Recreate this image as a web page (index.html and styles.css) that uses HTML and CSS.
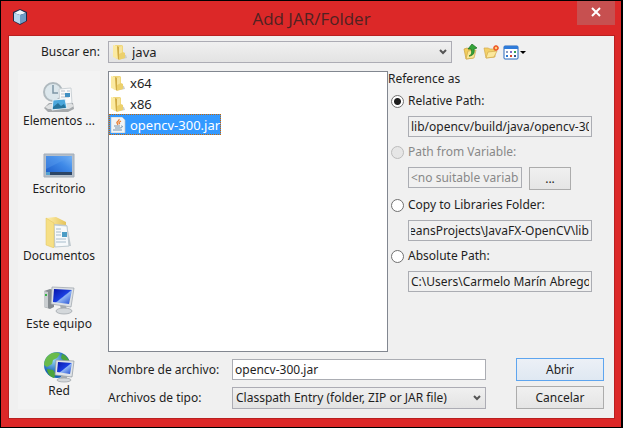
FILE: index.html
```
<!DOCTYPE html>
<html lang="es">
<head>
<meta charset="utf-8">
<title>Add JAR/Folder</title>
<link rel="stylesheet" href="styles.css">
</head>
<body>

<!-- shapes used more than once -->
<svg class="defs" aria-hidden="true">
  <defs>
    <linearGradient id="paper" x1="0" x2="1">
      <stop offset="0" stop-color="#fff0ae"/>
      <stop offset="1" stop-color="#e5c35a"/>
    </linearGradient>
    <linearGradient id="screen" x1="0" y1="0" x2="1" y2="1">
      <stop offset="0" stop-color="#0714a8"/>
      <stop offset=".5" stop-color="#1a3ee0"/>
      <stop offset=".55" stop-color="#8fb4f4"/>
      <stop offset="1" stop-color="#1b48d2"/>
    </linearGradient>
    <linearGradient id="desk" x1="0" y1="1" x2="1" y2="0">
      <stop offset="0" stop-color="#1b5bc8"/>
      <stop offset=".6" stop-color="#3f8ae8"/>
      <stop offset="1" stop-color="#76b3f5"/>
    </linearGradient>
    <radialGradient id="globe" cx=".35" cy=".3">
      <stop offset="0" stop-color="#9bd8fa"/>
      <stop offset="1" stop-color="#1764b4"/>
    </radialGradient>
    <symbol id="folder" viewBox="0 0 16 16">
      <path d="M10 10l4 1 1 3-5 1z" fill="#cdcec8"/>
      <path d="M3 1h7l1 1v12l-5 1-3-1z" fill="#f0d77c"/>
      <path d="M1 1l4 1 1 13-5-2z" fill="#fbeaa2"/>
      <path d="M5 2l2 1v12l-1 1z" fill="#d0ab45"/>
      <path d="M7 3l3-1v7l-3 2z" fill="#f7e49a"/>
      <path d="M7 10l4-2 2 1v5l-6 2z" fill="#ecd06c"/>
    </symbol>
    <symbol id="chevron" viewBox="0 0 8 6">
      <path d="M1 1l3 3 3-3" fill="none" stroke="#555" stroke-width="2"/>
    </symbol>
  </defs>
</svg>

<div class="window">
  <header class="titlebar">
    <svg class="app-icon" viewBox="0 0 16 16" aria-hidden="true">
      <path d="M8 0l7 3v9l-7 4-7-4V3z" fill="#1c2c4c"/>
      <path d="M8 1l6 3-6 2-6-2z" fill="#eef7fd"/>
      <path d="M2 4l6 2v9l-6-3z" fill="#b7d7ee"/>
      <path d="M14 4L8 6v9l6-3z" fill="#6f9cc6"/>
    </svg>
    <h1>Add JAR/Folder</h1>
    <button class="close" aria-label="Cerrar">
      <svg viewBox="0 0 10 10"><path d="M1 1l8 8M9 1L1 9" stroke="#fff" stroke-width="2"/></svg>
    </button>
  </header>

  <main class="content">
    <label class="look-label" for="look">Buscar en:</label>
    <div class="look-row">
      <div class="combo has-icon">
        <svg class="combo-icon"><use href="#folder"/></svg>
        <select id="look"><option>java</option></select>
        <svg class="combo-arrow"><use href="#chevron"/></svg>
      </div>
      <div class="tools">
        <button aria-label="Subir un nivel">
          <svg viewBox="0 0 16 16">
            <path d="M1 5l3-1 2 1h4v9l-7 1z" fill="#f2cd5c" stroke="#c9a040" stroke-width=".7"/>
            <path d="M3 15l2-8 8-1-2 8z" fill="#fbe795" stroke="#cda648" stroke-width=".7"/>
            <path d="M6 12c3-1 3-4 2-7H5l4-5 5 4-3 1c1 4-1 7-5 7z" fill="#35a53a" stroke="#18701f" stroke-width=".7"/>
          </svg>
        </button>
        <button aria-label="Crear carpeta">
          <svg viewBox="0 0 16 16">
            <path d="M1 4h4l2 1h5v8l-9 1z" fill="#f3d067" stroke="#d3aa4c" stroke-width=".7"/>
            <path d="M3 14l2-6 9-1-3 6z" fill="#fbe89c" stroke="#d3aa4c" stroke-width=".7"/>
            <path d="M13 1v6M10 4h6M11 2l4 4M15 2l-4 4" stroke="#ee5a2b" stroke-width="1.5"/>
            <circle cx="13" cy="4" r="1.2" fill="#ffd07a"/>
          </svg>
        </button>
        <button class="wide" aria-label="Ver">
          <svg viewBox="0 0 24 16">
            <rect x="1" y="2" width="14" height="13" rx="1" fill="#fff" stroke="#2467bd"/>
            <path d="M1 2h14v3H1z" fill="#2f7bd9"/>
            <path d="M3 7h2v2H3z" fill="#8a9ac0"/><path d="M7 7h2v2H7z" fill="#7e6fc5"/><path d="M11 7h2v2h-2z" fill="#37a052"/>
            <path d="M3 11h2v2H3z" fill="#2b78d0"/><path d="M7 11h2v2H7z" fill="#d8492d"/><path d="M11 11h2v2h-2z" fill="#37548a"/>
            <path d="M17 7h6l-3 3z" fill="#000"/>
          </svg>
        </button>
      </div>
    </div>

    <nav class="places">
      <button>
        <svg viewBox="0 0 32 32">
          <path d="M1 27l5-5h24l1 6-6 3H5z" fill="#a5a9ac"/>
          <path d="M2 26l5-3h22l2 2-5 3H5z" fill="#dfe1e2"/>
          <circle cx="10" cy="11" r="9" fill="#dce7ec" stroke="#b0babf" stroke-width="2"/>
          <path d="M10 4v8h5" fill="none" stroke="#7e96a5" stroke-width="1.5"/>
          <path d="M16 8l12-1 1 15-12 2z" fill="#f8f9fa" stroke="#ccd2d6"/>
          <path d="M18 10h4M18 13h4M18 16h8M24 10h3" stroke="#b6c0ca"/>
          <path d="M22 12h5v4h-5z" fill="#3f8fc2"/>
          <path d="M10 19l12-1 2 9-15 2z" fill="#4ba7dc" stroke="#eaf3f7"/>
          <path d="M10 26l5-4 3 3 3-2 2 4-13 1z" fill="#26749c"/>
        </svg>
        <span>Elementos ...</span>
      </button>
      <button>
        <svg viewBox="0 0 32 32">
          <path d="M1 5h30v23H1z" fill="#b5bfca" stroke="#a3adb8"/>
          <path d="M3 7h26v19H3z" fill="url(#desk)"/>
          <path d="M3 7h26L3 20z" fill="#5d9eee" opacity=".4"/>
          <path d="M3 23h26v3H3z" fill="#2c4565"/>
          <path d="M3 23h4v3H3z" fill="#54a0cf"/>
        </svg>
        <span>Escritorio</span>
      </button>
      <button>
        <svg viewBox="0 0 32 32">
          <path d="M3 2l10-1 10 5v22l-13 2z" fill="url(#paper)"/>
          <path d="M11 8l13 1 4 21-17 1z" fill="#bfc8ce"/>
          <path d="M11 9l13 1 2 20-14 1z" fill="#f6f9fb" stroke="#bfcbd2"/>
          <path d="M13 13h5M13 16h5M13 19h5M13 23h10M13 26h10" stroke="#a8bdcc"/>
          <path d="M19 16h5v5h-5z" fill="#4b9cc5"/>
          <path d="M3 2l8 5v25l-8-3z" fill="#f6df85" stroke="#dfc15c" stroke-width=".5"/>
        </svg>
        <span>Documentos</span>
      </button>
      <button>
        <svg viewBox="0 0 32 32">
          <path d="M1 7l6-2 4 1v17l-4 2-6-2z" fill="#858b90"/>
          <path d="M1 7l4 1v16l-4-1z" fill="#c9cdd0"/>
          <path d="M2 10h2v2H2z" fill="#35b345"/>
          <path d="M9 3l22 1-3 19-20-3z" fill="#dde1e5" stroke="#9aa1a8" stroke-width=".7"/>
          <path d="M11 5l18 1-3 14-16-2z" fill="url(#screen)"/>
          <path d="M17 21l6 1 1 4h-6z" fill="#a7adb2"/>
          <ellipse cx="21" cy="27" rx="8" ry="3" fill="#d4d8db" stroke="#9ba1a6" stroke-width=".7"/>
        </svg>
        <span>Este equipo</span>
      </button>
      <button>
        <svg viewBox="0 0 32 32">
          <circle cx="14" cy="14" r="13" fill="url(#globe)"/>
          <path d="M6 4c4-3 9-3 11-1l-3 4-4 2-1 4-5 3-3-2c0-4 2-8 5-10z" fill="#69bb4b"/>
          <path d="M19 3c4 1 7 5 8 9l-6-2-3-3zM4 18l6 1 3 4-2 4c-4-1-7-5-7-9z" fill="#4ba43c"/>
          <path d="M13 9l18 1-2 16-17-2z" fill="#e0e4e8" stroke="#8e969e" stroke-width=".7"/>
          <path d="M15 11l14 1-2 11-13-2z" fill="url(#screen)"/>
          <path d="M18 25h6v3h-6z" fill="#a7adb2"/>
          <ellipse cx="21" cy="29" rx="7" ry="2" fill="#d4d8db" stroke="#9ba1a6" stroke-width=".7"/>
        </svg>
        <span>Red</span>
      </button>
    </nav>

    <div class="chooser">
      <div class="panes">
        <ul class="files">
          <li><button><svg><use href="#folder"/></svg>x64</button></li>
          <li><button><svg><use href="#folder"/></svg>x86</button></li>
          <li>
            <button class="selected">
              <svg viewBox="0 0 16 16">
                <path d="M1 0h11l3 3v13H1z" fill="#f1f4f6" stroke="#b9c3cb" stroke-width=".7"/>
                <path d="M9 2c1 2-3 3-2 4l1 2M11 4c-2 1-3 2-1 3" fill="none" stroke="#e8792b" stroke-width="1.2"/>
                <path d="M4 9h6M5 11h5M11 9c3 0 1 2-1 2M3 13h9" fill="none" stroke="#7893ab"/>
              </svg>opencv-300.jar
            </button>
          </li>
        </ul>

        <fieldset class="reference">
          <legend>Reference as</legend>
          <label class="choice"><input type="radio" name="ref" checked>Relative Path:</label>
          <div class="field">
            <input type="text" aria-label="Relative Path" value="lib/opencv/build/java/opencv-300.jar" readonly>
          </div>
          <label class="choice off"><input type="radio" name="ref" disabled>Path from Variable:</label>
          <div class="field">
            <input type="text" aria-label="Path from Variable" value="&lt;no suitable variable&gt;" disabled>
            <button class="btn more">...</button>
          </div>
          <label class="choice"><input type="radio" name="ref">Copy to Libraries Folder:</label>
          <div class="field">
            <input type="text" id="libs" aria-label="Copy to Libraries Folder" value="NetBeansProjects\JavaFX-OpenCV\lib" readonly>
          </div>
          <label class="choice"><input type="radio" name="ref">Absolute Path:</label>
          <div class="field">
            <input type="text" aria-label="Absolute Path" value="C:\Users\Carmelo Marín Abrego\opencv-300.jar" readonly>
          </div>
        </fieldset>
      </div>

      <div class="bottom">
        <label for="filename">Nombre de archivo:</label>
        <input type="text" id="filename" value="opencv-300.jar">
        <button class="btn default">Abrir</button>
        <label for="filetype">Archivos de tipo:</label>
        <div class="combo">
          <select id="filetype"><option>Classpath Entry (folder, ZIP or JAR file)</option></select>
          <svg class="combo-arrow"><use href="#chevron"/></svg>
        </div>
        <button class="btn">Cancelar</button>
      </div>
    </div>
  </main>
</div>

<script>
// show the end of the libraries path
var libs = document.getElementById('libs');
libs.scrollLeft = libs.scrollWidth;
</script>

</body>
</html>
```

FILE: styles.css
```
* {
  box-sizing: border-box;
}

body {
  margin: 0;
  color: #1e1e1e;
}

body, button, input, select {
  font-family: 'Noto Sans', 'Open Sans', sans-serif;
  font-size: 12px;
  line-height: 16px;
}

button {
  padding: 0;
  border: 0;
  background: none;
  color: inherit;
}

.defs {
  position: absolute;
  width: 0;
  height: 0;
}

.window {
  min-height: 100vh;
  display: flex;
  flex-direction: column;
  padding: 0 6px 8px 7px;
  border: 1px solid #000;
  border-right-width: 2px;
  background: #dc2828;
}

.titlebar {
  height: 34px;
  display: grid;
  grid-template-columns: 38px 1fr 38px;
}

.app-icon {
  width: 16px;
  height: 16px;
  margin: 8px 4px;
}

.titlebar h1 {
  margin: 0;
  text-align: center;
  font-family: 'Open Sans', 'Noto Sans', sans-serif;
  font-size: 17px;
  font-weight: normal;
  line-height: 36px;
  color: #4f2222;
}

.close {
  height: 24px;
  background: #c75050;
}

.close svg {
  width: 10px;
  height: 10px;
}

.content {
  flex: 1;
  display: grid;
  grid-template-columns: 82px 1fr;
  grid-template-rows: 22px 1fr;
  gap: 8px;
  padding: 5px 10px 9px 9px;
  border: 1px solid #b92020;
  background: #f0f0f0;
}

.look-label {
  text-align: right;
  line-height: 22px;
}

.look-row {
  display: flex;
}

.look-row .combo {
  flex: 1;
}

.tools {
  width: 152px;
  display: flex;
  gap: 4px;
  padding-left: 11px;
  align-items: center;
}

.tools button, .tools svg {
  width: 16px;
  height: 16px;
}

.tools .wide, .tools .wide svg {
  width: 24px;
}

.combo {
  position: relative;
  height: 22px;
}

.combo select {
  width: 100%;
  height: 100%;
  padding: 0 20px 0 3px;
  border: 1px solid #acacb4;
  border-radius: 0;
  background: linear-gradient(#f0f0f0, #e3e3e3);
  color: inherit;
  appearance: none;
}

.has-icon select {
  padding-left: 23px;
  font-size: 13px;
}

.combo-icon {
  position: absolute;
  left: 4px;
  top: 3px;
  width: 16px;
  height: 16px;
}

.combo-arrow {
  position: absolute;
  right: 5px;
  top: 8px;
  width: 8px;
  height: 6px;
  pointer-events: none;
}

.places {
  display: flex;
  flex-direction: column;
  background: #f3f3f3;
}

.places button {
  flex: 1;
  display: flex;
  flex-direction: column;
  align-items: center;
  padding-top: 10px;
}

.places svg {
  width: 32px;
  height: 32px;
}

.chooser {
  display: flex;
  flex-direction: column;
  gap: 6px;
}

.panes {
  flex: 1;
  display: flex;
}

.files {
  flex: 1;
  margin: 0;
  padding: 0;
  list-style: none;
  border: 1px solid #828790;
  background: #fff;
}

.files button {
  height: 21px;
  display: flex;
  align-items: center;
  gap: 4px;
  padding: 0 1px;
  font-size: 13px;
}

.files svg {
  width: 16px;
  height: 16px;
}

.files .selected {
  outline: 1px dotted #cc6600;
  outline-offset: -1px;
  background: #3399ff;
  color: #fff;
}

.reference {
  width: 216px;
  margin: 0;
  padding: 0;
  border: 0;
}

.reference legend {
  padding: 0;
  margin-bottom: 6px;
}

.choice {
  display: flex;
  align-items: center;
  height: 16px;
}

.choice input {
  width: 13px;
  height: 13px;
  margin: 0 4px 0 3px;
  border: 1px solid #707070;
  border-radius: 50%;
  background: #fff;
  appearance: none;
}

.choice input:checked {
  background: radial-gradient(#1e1e1e 3px, #fff 4px);
}

.choice input:disabled {
  border-color: #bcbcbc;
  background: #e6e6e6;
}

.off {
  color: #888;
}

.field {
  display: flex;
  gap: 7px;
  margin: 7px 12px 7px 20px;
}

input[type="text"] {
  flex: 1;
  min-width: 0;
  height: 21px;
  padding: 0 2px;
  border: 1px solid #abadb3;
  background: #f0f0f0;
  color: inherit;
}

.field input:disabled {
  flex: none;
  width: 114px;
  color: #888;
}

.btn {
  height: 23px;
  border: 1px solid #acacac;
  background: linear-gradient(#f0f0f0, #e5e5e5);
}

.more {
  width: 42px;
}

.default {
  border: 1px solid #5ea5ef;
  background: linear-gradient(#ecf0f6, #dfe8f2);
}

.bottom {
  display: grid;
  grid-template-columns: 124px 1fr 118px;
  gap: 5px 0;
  align-items: center;
}

.bottom .btn {
  margin-left: 30px;
}

.bottom #filename {
  background: #fff;
}
```
